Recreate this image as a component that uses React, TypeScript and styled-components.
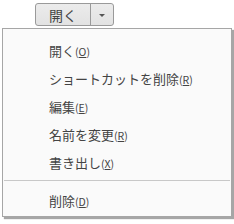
import styled, { createGlobalStyle } from "styled-components";

const GlobalStyle = createGlobalStyle`
  body {
    margin: 0;
    background: #ffffff;
    font-family: "Noto Sans CJK JP", "Noto Sans", sans-serif;
  }
`;

interface MenuEntry {
  label: string;
  hotkey: string;
}

const items: MenuEntry[] = [
  { label: "開く", hotkey: "O" },
  { label: "ショートカットを削除", hotkey: "R" },
  { label: "編集", hotkey: "E" },
  { label: "名前を変更", hotkey: "R" },
  { label: "書き出し", hotkey: "X" },
];

const lastItem: MenuEntry = { label: "削除", hotkey: "D" };

const Row = ({ label, hotkey }: MenuEntry) => (
  <MenuItem>
    {label}
    <Mnemonic>
      (<u>{hotkey}</u>)
    </Mnemonic>
  </MenuItem>
);

const App = () => {
  return (
    <Page>
      <GlobalStyle />
      <SplitButton>
        <MainPart>開く</MainPart>
        <ArrowPart>
          <Caret />
        </ArrowPart>
      </SplitButton>
      <Menu>
        {items.map((it, i) => (
          <Row key={i} label={it.label} hotkey={it.hotkey} />
        ))}
        <Separator />
        <Row label={lastItem.label} hotkey={lastItem.hotkey} />
      </Menu>
    </Page>
  );
};

const Page = styled.div`
  width: 234px;
  height: 224px;
  padding-top: 3px;
  box-sizing: border-box;
`;

const SplitButton = styled.div`
  display: flex;
  margin-left: 35px;
  width: 79px;
  height: 23px;
  box-sizing: border-box;
  border: 1px solid #9a9a9a;
  border-radius: 3px;
  background: linear-gradient(#ececec, #e2e2e2);
  overflow: hidden;
`;

const MainPart = styled.div`
  width: 54px;
  display: flex;
  align-items: center;
  justify-content: center;
  font-size: 14px;
  color: #444;
  border-right: 1px solid #9a9a9a;
`;

const ArrowPart = styled.div`
  flex: 1;
  display: flex;
  align-items: center;
  justify-content: center;
`;

const Caret = styled.span`
  width: 0;
  height: 0;
  border-left: 3px solid transparent;
  border-right: 3px solid transparent;
  border-top: 3px solid #555;
  margin-top: 1px;
`;

const Menu = styled.div`
  margin: 2px 0 0 2px;
  width: 230px;
  height: 189px;
  box-sizing: border-box;
  border: 1px solid #a6a6a6;
  background: #fafafa;
  box-shadow: 2px 2px 1px rgba(0, 0, 0, 0.35);
  padding: 7px 0 0 0;
  display: flex;
  flex-direction: column;
`;

const MenuItem = styled.div`
  height: 28px;
  display: flex;
  align-items: center;
  padding-left: 46px;
  font-size: 13px;
  color: #444;
  white-space: nowrap;
`;

const Mnemonic = styled.span`
  font-size: 10.5px;
  margin-top: 3px;
`;

const Separator = styled.div`
  height: 1px;
  background: #c8c8c8;
  margin: 4px 1px 5px 1px;
`;

export default App;
